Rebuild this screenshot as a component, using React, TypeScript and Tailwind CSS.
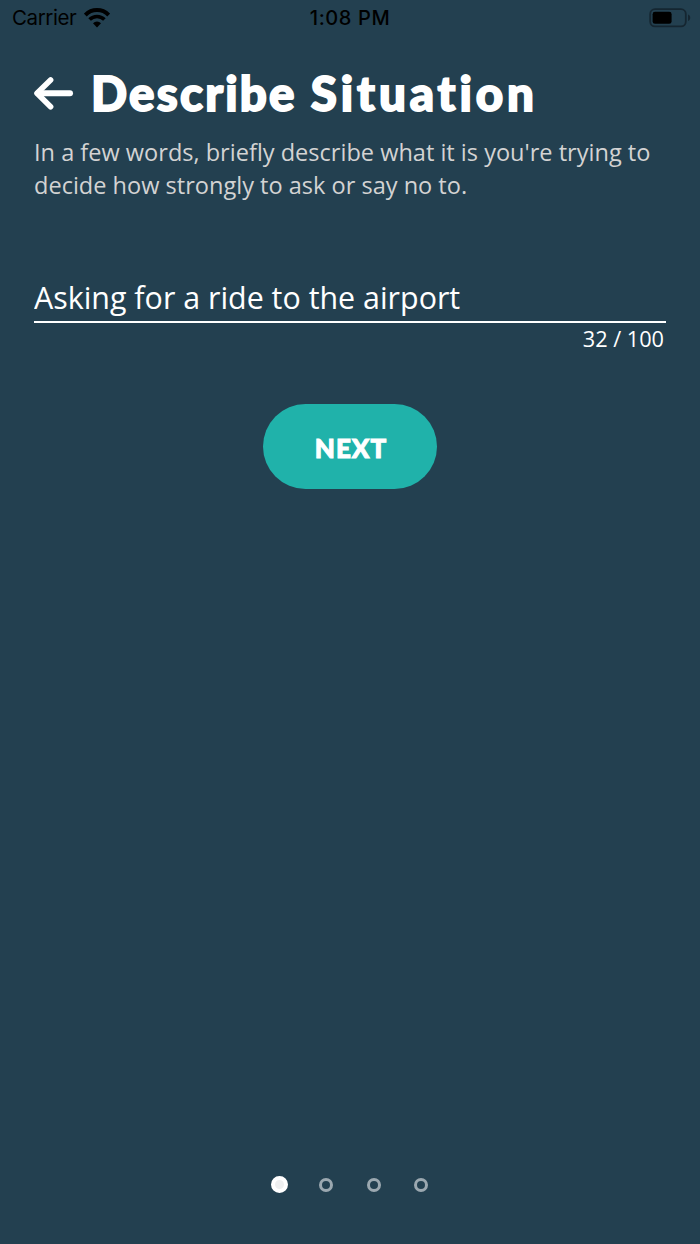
import { useState } from 'react';

const MAX_LENGTH = 100;
const STEPS = [0, 1, 2, 3];

const StatusBar = () => (
  <div className="grid h-9 grid-cols-3 items-center pl-3 pr-[9px] font-[Inter,sans-serif] text-black">
    <div className="flex items-center gap-2">
      <span className="text-[20.5px] leading-9 tracking-[-0.4px]">Carrier</span>
      <svg width="26" height="20" viewBox="0 0 26 20" fill="none">
        <path d="M1.300 7a16.400 16.400 0 0 1 23.400 0" stroke="currentColor" strokeWidth="4" />
        <path d="M5.600 11.600a10.400 10.400 0 0 1 14.800 0" stroke="currentColor" strokeWidth="3.600" />
        <path d="M13 19.400l-4-4.200a5.800 5.800 0 0 1 8 0z" fill="currentColor" />
      </svg>
    </div>
    <span className="mr-[3px] text-center text-[20px] font-medium leading-9 tracking-[0.6px]">1:08 PM</span>
    <svg className="justify-self-end" width="42" height="20" viewBox="0 0 42 20">
      <rect x="1.200" y="1.200" width="35.600" height="17.200" rx="4.800" fill="none" stroke="#152631" strokeWidth="1.800" />
      <rect x="3.600" y="3.800" width="19" height="12" rx="2.400" fill="#000" />
      <path d="M39 6.500c3 1 3 5.600 0 6.600z" fill="#152631" />
    </svg>
  </div>
);

const BackArrow = () => (
  <svg
    width="40"
    height="34"
    viewBox="0 0 40 34"
    fill="none"
    stroke="currentColor"
    strokeLinecap="round"
    strokeLinejoin="round"
  >
    <path d="M4 16.200h32" strokeWidth="6" />
    <path d="M16.600 3L3 16.200l13.600 13.600" strokeWidth="5.600" />
  </svg>
);

export default function App() {
  const [situation, setSituation] = useState('Asking for a ride to the airport');
  const [step, setStep] = useState(0);

  return (
    <div className="flex h-[1244px] w-[700px] flex-col overflow-hidden bg-[#234050] font-['Open_Sans',sans-serif] text-white">
      <StatusBar />

      <main className="flex flex-1 flex-col px-[34px] pt-[27px]">
        <header className="flex h-[62px] items-center gap-[17px]">
          <button aria-label="Back">
            <BackArrow />
          </button>
          <h1 className="flex gap-[14px] whitespace-nowrap pb-0.5 font-[Lato,sans-serif] text-[47.500px] font-black leading-[60px] [-webkit-text-stroke:1.800px_white]">
            <span className="tracking-[2.200px]">Describe </span>
            <span className="tracking-[3.900px]">Situation</span>
          </h1>
        </header>

        <p className="mt-[11px] whitespace-nowrap text-[23.560px] leading-[32.500px] text-[#d3d3d3]">
          In a few words, briefly describe what it is you're trying to
          <br />
          decide how strongly to ask or say no to.
        </p>

        <input
          type="text"
          value={situation}
          maxLength={MAX_LENGTH}
          onChange={(e) => setSituation(e.target.value)}
          className="mt-[74px] h-[48px] w-full border-b-2 border-white bg-transparent pb-0.5 text-[30.400px] outline-none"
        />
        <span className="mr-0.5 self-end text-[21.700px] leading-8">
          {situation.length} / {MAX_LENGTH}
        </span>

        <button
          onClick={() => setStep(Math.min(step + 1, STEPS.length - 1))}
          className="mt-[49px] h-[84.500px] w-[174.500px] self-center rounded-full bg-[#20b2aa] pl-0.5 pt-1 font-[Lato,sans-serif] text-[26px] font-black tracking-[1px] [-webkit-text-stroke:1px_white]"
        >
          NEXT
        </button>
      </main>

      <nav className="flex h-[119px] items-center justify-center gap-[30px]">
        {STEPS.map((s) => (
          <span key={s} className="flex w-[17.300px] justify-center">
            {s === step ? (
              <span className="size-[17px] rounded-full border-4 border-white bg-[#eeeff0]" />
            ) : (
              <span className="size-[14px] rounded-full border-[3px] border-[#9ba8b0]" />
            )}
          </span>
        ))}
      </nav>
    </div>
  );
}
